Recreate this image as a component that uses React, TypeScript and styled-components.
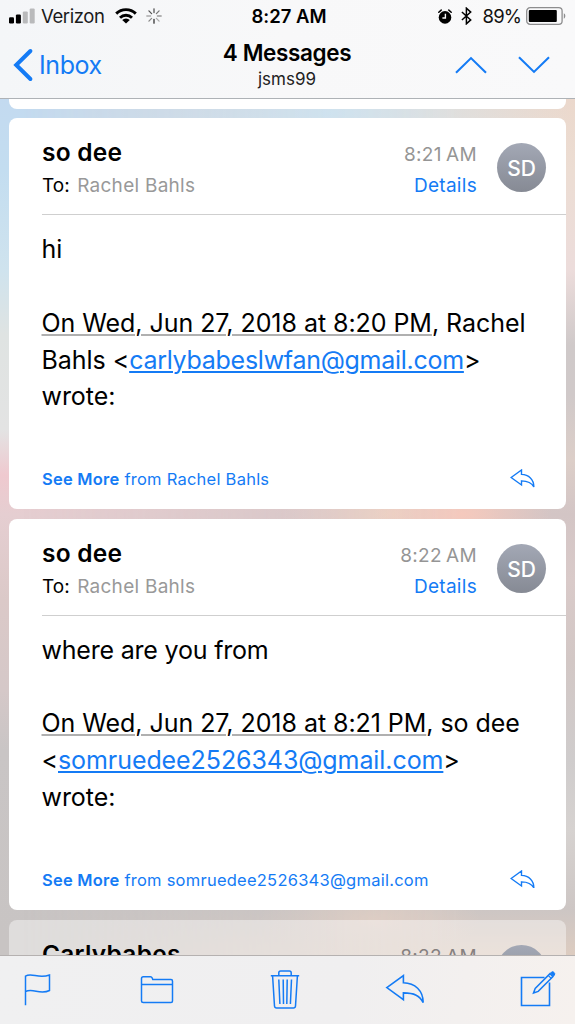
import React from 'react';
import styled, { createGlobalStyle } from 'styled-components';

const BLUE = '#147bf5';

const GlobalStyle = createGlobalStyle`
  * { box-sizing: border-box; }
  body {
    margin: 0;
    font-family: Inter, "Liberation Sans", sans-serif;
    color: #000;
    font-feature-settings: "calt" 0;
  }
  svg { display: block; flex: none; }
`;

/* ---------- screen ---------- */

const Screen = styled.div`
  position: relative;
  width: 575px;
  height: 1024px;
  overflow: hidden;
  display: flex;
  flex-direction: column;
  background: linear-gradient(
    #c3daf0 98px, #c3ddf0 170px, #cfe3ee 270px, #dfe3e2 335px, #e3e3e3 430px,
    #efc9cf 475px, #e5ced1 515px, #dbc9c8 600px, #d5c8c8 690px, #c9c5c5 750px, #c8c4c3 940px
  );
`;

/* Right-hand tint of the wallpaper, fading in across the screen. */
const WallpaperTint = styled.div`
  position: absolute;
  inset: 0;
  background:
    radial-gradient(90px 40px at 462px 514px, #f5c9bd, transparent),
    radial-gradient(110px 50px at 390px 514px, #ecd2c2, transparent),
    radial-gradient(110px 40px at 370px 920px, #e2cfc4, transparent),
    radial-gradient(240px 60px at 330px 113px, #d3e5ee, transparent),
    linear-gradient(
      #ebd8cc 98px, #ecddd3 170px, #ecdcdb 270px, #cfc9c9 345px, #d0c9c9 395px, #dccec8 460px,
      #d3c5c5 514px, #d9cac9 580px, #d2c7c5 660px, #cfcccc 760px, #d6d2d0 830px, #cdc6c4 910px, #ddccc0 955px
    );
  mask-image: linear-gradient(to right, transparent 20px, #000 460px);
`;

/* ---------- top bars ---------- */

const TopBar = styled.header`
  position: relative;
  height: 99px;
  border-bottom: 1px solid #aeb2b6;
  background: linear-gradient(to right, #f4f6f8, #f8f8f9 50%, #f9f9fa);
`;

const StatusBar = styled.div`
  height: 32px;
  padding: 0 9px;
  display: grid;
  grid-template-columns: 1fr auto 1fr;
  align-items: center;
  font-size: 18.5px;
  line-height: 32px;
`;

const StatusGroup = styled.div<{ $end?: boolean }>`
  display: flex;
  align-items: center;
  justify-content: ${(p) => (p.$end ? 'flex-end' : 'flex-start')};
`;

const StatusGap = styled.span`
  width: 9px;
`;

const Carrier = styled.span`
  margin: 0 10px 0 6px;
  letter-spacing: -0.4px;
  color: #1a1a1a;
`;

const Clock = styled.time`
  font-weight: 600;
  padding-left: 3px;
`;

const BatteryLevel = styled.span`
  margin: 0 5px 0 11px;
  letter-spacing: -0.9px;
  color: #111;
`;

const NavBar = styled.nav`
  height: 66px;
  padding: 0 25px 0 13px;
  display: grid;
  grid-template-columns: 1fr auto 1fr;
`;

const BackButton = styled.a`
  height: 66px;
  display: flex;
  align-items: center;
  gap: 5px;
  font-size: 25px;
  letter-spacing: -0.4px;
  color: ${BLUE};
`;

const TitleBlock = styled.div`
  text-align: center;
  padding: 6px 0 0 11px;
`;

const Title = styled.h1`
  margin: 0;
  font-size: 22.5px;
  line-height: 30px;
  font-weight: 600;
  letter-spacing: -0.35px;
`;

const Subtitle = styled.div`
  font-size: 17px;
  line-height: 22px;
  color: #222;
`;

const NavArrows = styled.div`
  height: 66px;
  display: flex;
  justify-content: flex-end;
  align-items: center;
  gap: 31px;
`;

/* ---------- message cards ---------- */

const Thread = styled.main`
  position: relative;
  flex: 1;
  min-height: 0;
  overflow: hidden;
  padding: 0 9px;
  display: flex;
  flex-direction: column;
  gap: 9.5px;
`;

const PreviousCard = styled.div`
  flex: none;
  height: 9.7px;
  border-radius: 0 0 8px 8px;
  background: #fff;
`;

const Card = styled.article<{ $unloaded?: boolean }>`
  flex: none;
  height: 391.2px;
  border-radius: 8px;
  background: ${(p) => (p.$unloaded ? 'rgba(255, 255, 255, 0.42)' : '#fff')};
  display: flex;
  flex-direction: column;
`;

const CardHeader = styled.div`
  flex: none;
  margin-left: 33px;
  height: 97px;
  padding: 19px 20px 0 0;
  border-bottom: 1px solid #cfcfcf;
  display: flex;
`;

const People = styled.div`
  flex: 1;
`;

const Sender = styled.h2`
  margin: 0 0 5px;
  font-size: 24.5px;
  line-height: 30px;
  font-weight: 600;
  letter-spacing: 0.25px;
`;

const Recipient = styled.div`
  font-size: 19px;
  line-height: 28px;
  display: flex;
  gap: 7.5px;
`;

const RecipientName = styled.span`
  color: #999;
  letter-spacing: 0.27px;
`;

const Meta = styled.div`
  padding-top: 4px;
  display: flex;
  flex-direction: column;
  gap: 3px;
  align-items: flex-end;
  font-size: 19px;
  line-height: 28px;
  letter-spacing: 0.3px;
`;

const SentAt = styled.time<{ $dark?: boolean }>`
  word-spacing: -1.3px;
  color: ${(p) => (p.$dark ? '#858080' : '#959595')};
`;

const DetailsLink = styled.a`
  color: ${BLUE};
`;

const Avatar = styled.div`
  width: 49px;
  height: 49px;
  margin: 6px 0 0 20px;
  border-radius: 50%;
  background: linear-gradient(#a3a8b5, #868a94);
  color: #fff;
  font-size: 21px;
  font-weight: 500;
  line-height: 51px;
  text-align: center;
`;

const Body = styled.div`
  flex: 1;
  padding: 16px 20px 0 32.5px;
  font-size: 25px;
  line-height: 36.8px;
`;

const Paragraph = styled.p<{ $tracking?: number }>`
  margin: 0;
  white-space: nowrap;
  letter-spacing: ${(p) => p.$tracking ?? -0.05}px;

  & + & {
    margin-top: 36.8px;
  }
`;

const DateLink = styled.span`
  text-decoration: underline #b0b0b0 1.5px;
  text-underline-offset: 2px;
`;

const MailLink = styled.a<{ $tracking: number }>`
  color: ${BLUE};
  letter-spacing: ${(p) => p.$tracking}px;
  text-decoration: underline 1.5px;
  text-underline-offset: 2px;
`;

const CardFooter = styled.div`
  flex: none;
  height: 63px;
  padding: 0 31.5px 0 33px;
  display: flex;
  justify-content: space-between;
  align-items: flex-start;
  color: ${BLUE};
  font-size: 16.5px;
  line-height: 66px;
  letter-spacing: 0.24px;
`;

const SeeMore = styled.b`
  font-weight: 600;
`;

const ReplySlot = styled.span`
  padding-top: 22.5px;
`;

/* ---------- toolbar ---------- */

const Toolbar = styled.footer`
  position: relative;
  height: 69px;
  padding: 13.5px 0 0 23px;
  border-top: 1px solid #b5b1b0;
  background: linear-gradient(100deg, #f0f0f1 0, #f0eff0 60%, #f6f1ee);
  display: grid;
  grid-template-columns: 117px 129.5px 115.5px 135px 36px;
  align-items: start;
`;

const ToolbarReply = styled.span`
  padding-top: 4px;
`;

/* ---------- icons ---------- */

const SignalIcon = () => (
  <svg width="26" height="16" viewBox="0 0 26 16">
    <rect x="0" y="9.3" width="5" height="6.2" rx="1.2" />
    <rect x="6.9" y="6.4" width="5" height="9.1" rx="1.2" />
    <rect x="13.8" y="3.4" width="5" height="12.1" rx="1.2" fill="#b9babb" />
    <rect x="20.7" y="0.4" width="5" height="15.1" rx="1.2" fill="#b9babb" />
  </svg>
);

const WifiIcon = () => (
  <svg width="22" height="16" viewBox="0 0 22 16">
    <g fill="none" stroke="#000" strokeWidth="2.9">
      <path d="M1.2 5.6a14 14 0 0 1 19.6 0" />
      <path d="M5 9.7a8.6 8.6 0 0 1 12 0" />
    </g>
    <path d="M11 15.6 7.2 12a5.4 5.4 0 0 1 7.6 0z" />
  </svg>
);

const SPOKES = ['#555', '#777', '#999', '#aaa', '#333', '#888', '#aaa', '#555'];

const SpinnerIcon = () => (
  <svg width="16" height="16" viewBox="-8 -8 16 16">
    {SPOKES.map((color, i) => (
      <path key={i} d="M0-3.4V-7.2" stroke={color} strokeWidth="1.3" strokeLinecap="round" transform={`rotate(${i * 45})`} />
    ))}
  </svg>
);

const AlarmIcon = () => (
  <svg width="14" height="15" viewBox="0 0 14 15">
    <circle cx="7" cy="8.4" r="6.3" />
    <path d="M.8 3.2 3.2 1.1M13.2 3.2 10.800 1.1" stroke="#000" strokeWidth="1.5" strokeLinecap="round" />
    <path d="M7.4 4.8v4.2H4.4" fill="none" stroke="#f8f8f9" strokeWidth="1.4" />
  </svg>
);

const BluetoothIcon = () => (
  <svg width="11" height="18" viewBox="0 0 11 18">
    <path d="M.9 5 9.7 12.9 5.4 16.8V1.2L9.7 5.1.9 13" fill="none" stroke="#000" strokeWidth="1.5" />
  </svg>
);

const BatteryIcon = () => (
  <svg width="40" height="18" viewBox="0 0 40 18">
    <rect x=".7" y=".7" width="35.4" height="16.6" rx="3.4" fill="none" stroke="#8d8d8e" strokeWidth="1.3" />
    <rect x="2.8" y="3" width="28" height="12" rx="1" />
    <path d="M37.8 6.3c2 .7 2 4.7 0 5.4z" fill="#8d8d8e" />
  </svg>
);

const BackIcon = () => (
  <svg width="21" height="34" viewBox="0 0 21 34">
    <path d="M17.4 3 3.2 17l14.2 14" fill="none" stroke={BLUE} strokeWidth="4" strokeLinecap="round" strokeLinejoin="miter" />
  </svg>
);

const ArrowIcon = ({ down }: { down?: boolean }) => (
  <svg width="32" height="18" viewBox="0 0 32 18">
    <path d={down ? 'M1 1.2 16 15.9 31 1.2' : 'M1 16.8 16 2.1 31 16.8'} fill="none" stroke={BLUE} strokeWidth="2.1" />
  </svg>
);

const ReplyIcon = ({ width, stroke }: { width: number; stroke: number }) => (
  <svg width={width} height={(width * 30) / 40} viewBox="0 0 40 30">
    <path
      d="M1.8 13.6 18.4 1.6V8.7C30 9 38.2 16.6 38.2 28.6 34.6 21.6 29.5 19 18.4 18.9V25.6Z"
      fill="none"
      stroke={BLUE}
      strokeWidth={stroke}
      strokeLinejoin="miter"
    />
  </svg>
);

const FlagIcon = () => (
  <svg width="30" height="38" viewBox="0 0 30 38">
    <path d="M2.5 35.3V6.1C9 2.2 15.5 9.4 26.5 5V20.5C17 25.5 10 17.6 2.5 21.6" fill="none" stroke={BLUE} strokeWidth="1.5" />
  </svg>
);

const FolderIcon = () => (
  <svg width="34" height="38" viewBox="0 0 34 38">
    <path
      d="M1.5 31V8.6Q1.5 6.7 3.3 6.7H10.5Q11.7 6.7 12.2 8L12.8 9.5H31Q32.5 9.5 32.5 11.2V31Q32.500 32.5 31 32.5H3.300Q1.5 32.5 1.5 31ZM1.5 14.5H32.5"
      fill="none"
      stroke={BLUE}
      strokeWidth="1.5"
    />
  </svg>
);

const TrashIcon = () => (
  <svg width="30" height="40" viewBox="0 0 30 40">
    <g fill="none" stroke={BLUE} strokeWidth="1.5">
      <path d="M.8 5.8H29.2M8.8 5.6V2.8Q8.8 1 10.6 1H19.4Q21.2 1 21.2 2.8V5.6" />
      <path d="M2.6 6 4.5 36Q4.7 38 6.6 38H23.4Q25.3 38 25.5 36L27.4 6" />
      <path d="M8.8 9.5 9.9 34M13.2 9.5 13.5 34M17.2 9.5 16.8 34M21.5 9.5 20.4 34" />
    </g>
  </svg>
);

const ComposeIcon = () => (
  <svg width="36" height="38" viewBox="0 0 36 38">
    <path d="M24.5 7.5H1.5V35.5H29.5V12.5" fill="none" stroke={BLUE} strokeWidth="1.6" />
    <path d="M13.500 23 15.2 18.4 30 3.6 33 6.6 18.2 21.4Z" fill="#f4f0ee" stroke={BLUE} strokeWidth="1.5" />
    <path d="M28.2 5.400 31.2 8.400" stroke={BLUE} strokeWidth="1.3" />
    <path d="M30.600 3 31.4 2.2Q32.7 1 34 2.4 35.5 3.8 34.3 5.2L33.500 6Z" fill={BLUE} stroke={BLUE} />
  </svg>
);

/* ---------- messages ---------- */

interface MessageProps {
  sender: string;
  time: string;
  recipient?: string;
  initials?: string;
  from?: string;
  unloaded?: boolean;
  children?: React.ReactNode;
}

const Message = ({ sender, recipient, time, initials, from, unloaded, children }: MessageProps) => (
  <Card $unloaded={unloaded}>
    <CardHeader>
      <People>
        <Sender>{sender}</Sender>
        {!unloaded && (
          <Recipient>
            To: <RecipientName>{recipient}</RecipientName>
          </Recipient>
        )}
      </People>
      <Meta>
        <SentAt $dark={unloaded}>{time}</SentAt>
        {!unloaded && <DetailsLink>Details</DetailsLink>}
      </Meta>
      <Avatar>{initials}</Avatar>
    </CardHeader>
    {!unloaded && (
      <>
        <Body>{children}</Body>
        <CardFooter>
          <span>
            <SeeMore>See More</SeeMore> from {from}
          </span>
          <ReplySlot>
            <ReplyIcon width={25} stroke={2.2} />
          </ReplySlot>
        </CardFooter>
      </>
    )}
  </Card>
);

export default function App() {
  return (
    <Screen>
      <GlobalStyle />
      <WallpaperTint />
      <TopBar>
        <StatusBar>
          <StatusGroup>
            <SignalIcon />
            <Carrier>Verizon</Carrier>
            <WifiIcon />
            <StatusGap />
            <SpinnerIcon />
          </StatusGroup>
          <Clock>8:27 AM</Clock>
          <StatusGroup $end>
            <AlarmIcon />
            <StatusGap />
            <BluetoothIcon />
            <BatteryLevel>89%</BatteryLevel>
            <BatteryIcon />
          </StatusGroup>
        </StatusBar>
        <NavBar>
          <BackButton>
            <BackIcon />
            Inbox
          </BackButton>
          <TitleBlock>
            <Title>4 Messages</Title>
            <Subtitle>jsms99</Subtitle>
          </TitleBlock>
          <NavArrows>
            <ArrowIcon />
            <ArrowIcon down />
          </NavArrows>
        </NavBar>
      </TopBar>

      <Thread>
        <PreviousCard />
        <Message sender="so dee" recipient="Rachel Bahls" time="8:21 AM" initials="SD" from="Rachel Bahls">
          <Paragraph>hi</Paragraph>
          <Paragraph>
            <DateLink>On Wed, Jun 27, 2018 at 8:20 PM</DateLink>, Rachel
            <br />
            Bahls &lt;<MailLink $tracking={-0.27}>carlybabeslwfan@gmail.com</MailLink>&gt;
            <br />
            wrote:
          </Paragraph>
        </Message>
        <Message sender="so dee" recipient="Rachel Bahls" time="8:22 AM" initials="SD" from="somruedee2526343@gmail.com">
          <Paragraph $tracking={-0.2}>where are you from</Paragraph>
          <Paragraph>
            <DateLink>On Wed, Jun 27, 2018 at 8:21 PM</DateLink>, so dee
            <br />
            &lt;<MailLink $tracking={-0.08}>somruedee2526343@gmail.com</MailLink>&gt;
            <br />
            wrote:
          </Paragraph>
        </Message>
        <Message sender="Carlybabes" time="8:22 AM" unloaded />
      </Thread>

      <Toolbar>
        <FlagIcon />
        <FolderIcon />
        <TrashIcon />
        <ToolbarReply>
          <ReplyIcon width={40} stroke={1.6} />
        </ToolbarReply>
        <ComposeIcon />
      </Toolbar>
    </Screen>
  );
}
